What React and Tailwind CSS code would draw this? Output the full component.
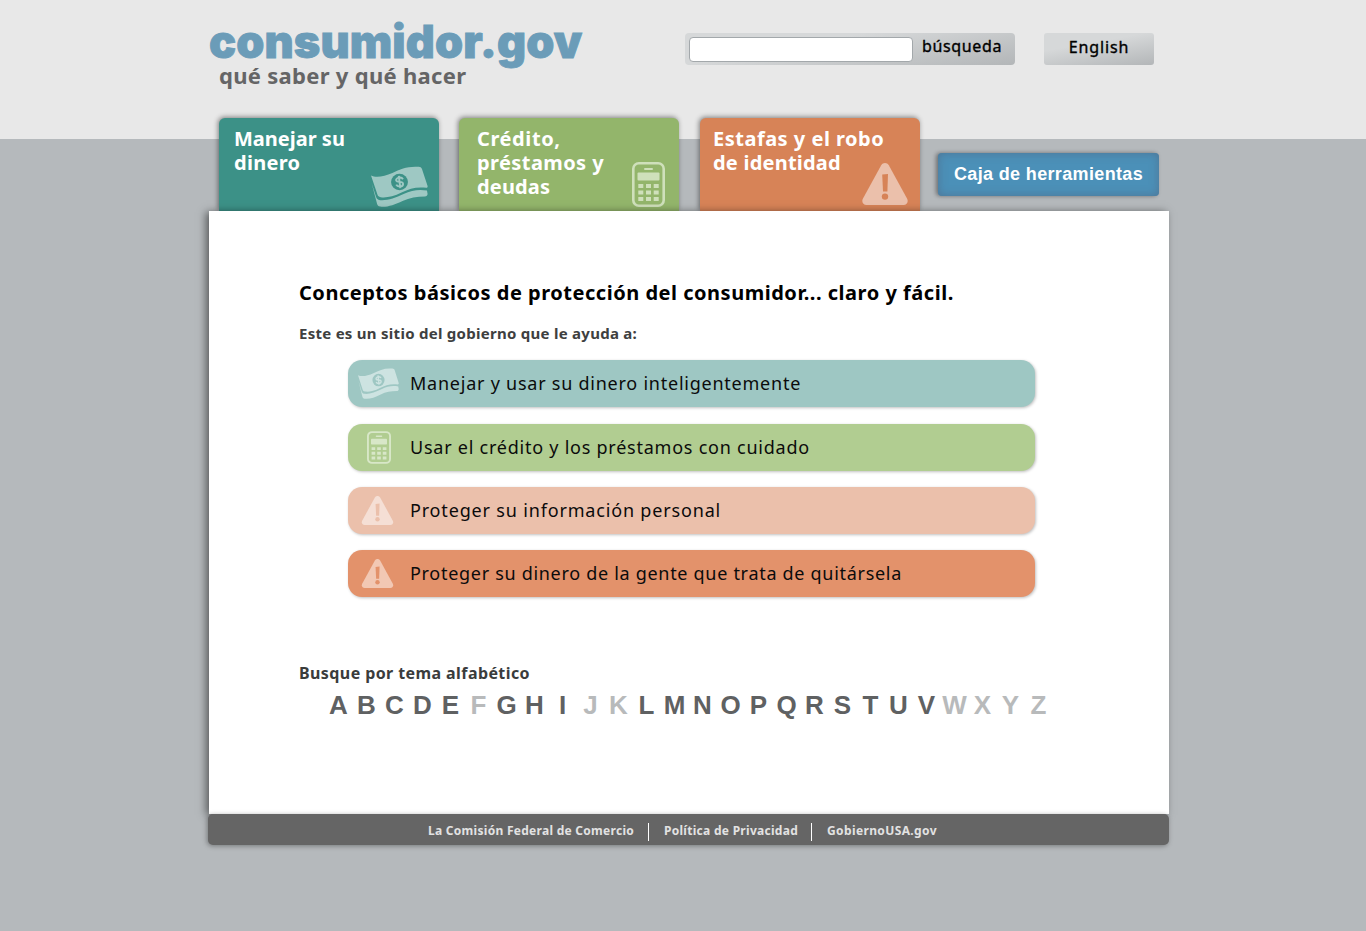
function Money({ className, fill, hole }) {
  return (
    <svg className={className} viewBox="0 0 56 41" preserveAspectRatio="none" aria-hidden="true">
      <path
        fill={fill}
        d="M0 9.5C5 12 13 10.5 21 7C29 3 36 0 47 0.8C48.5 0.9 49.4 1.5 50 2.8L55.6 20C55.8 21 55.4 21.8 54.4 21.8C45 20.5 38 22.5 30 26.5C22 30.5 15 32 9.5 31.2C7.5 30.8 7 30.3 6.4 28.8Z"
      />
      <path
        fill={fill}
        d="M0.6 17L5 31C5.8 33.2 7 34 9.5 34.2C17 34.6 24 31.6 32 28C40 24.4 47 23 55 24.6L55.6 28C55.4 29.6 54.6 30.4 53 30.4C45 30.4 38 31.5 31 35C23 39 15 41.6 9 40.6C7 40.2 6.6 39.4 6 38Z"
      />
      <circle cx="28" cy="16" r="8.3" fill={hole} />
      <path
        d="M31.4 13.2C30.6 11.8 28.8 11.3 27.2 11.7C25.2 12.2 24.3 13.6 24.8 14.7C25.3 15.9 27 15.8 28.5 15.9C30.3 16 31.6 16.6 31.5 18.1C31.4 19.6 29.8 20.5 28.2 20.5C26.6 20.5 25.3 19.8 24.8 18.6M27.3 9.8L28.8 22.2"
        fill="none"
        stroke={fill}
        strokeWidth="1.9"
      />
    </svg>
  );
}

function Calculator({ className, color }) {
  return (
    <svg className={className} viewBox="0 0 33 45" fill={color} aria-hidden="true">
      <rect x="1.3" y="1.3" width="30.4" height="42.4" rx="5.5" fill="none" stroke={color} strokeWidth="2.6" />
      <rect x="12" y="6" width="9" height="2" rx="1" />
      <rect x="5.5" y="10.5" width="22" height="8" rx="1" />
      <path d="M6.3 22h5v4h-5zM14 22h5v4h-5zM21.7 22h5v4h-5zM6.3 28.5h5v4h-5zM14 28.5h5v4h-5zM21.7 28.5h5v4h-5zM6.3 35h5v4h-5zM14 35h5v4h-5zM21.7 35h5v4h-5z" />
    </svg>
  );
}

function Warning({ className, fill, mark }) {
  return (
    <svg className={className} viewBox="0 0 46 42" aria-hidden="true">
      <path
        fill={fill}
        d="M19.2 2.2C21 -0.7 25 -0.7 26.8 2.2L45 35.4C46.8 38.8 45 42 41.5 42H4.5C1 42 -0.8 38.8 1 35.4Z"
      />
      <path fill={mark} d="M20.2 11.5L26 11L25.4 28.5H21Z" />
      <circle cx="23" cy="33.6" r="3.2" fill={mark} />
    </svg>
  );
}

const tabShadow = "shadow-[-1px_-1px_5px_rgba(0,0,0,0.45)]";

const items = [
  {
    text: "Manejar y usar su dinero inteligentemente",
    style: "bg-[#9ec7c3]",
    tracking: "tracking-[0.76px]",
    icon: <Money className="ml-[10px] h-[31px] w-[41px]" fill="#cde3e1" hole="#9ec7c3" />,
  },
  {
    text: "Usar el crédito y los préstamos con cuidado",
    style: "mt-[17px] bg-[#b1cd91]",
    tracking: "tracking-[0.76px]",
    icon: <Calculator className="ml-[19px] h-[33px] w-[24px]" color="#d8e7c8" />,
  },
  {
    text: "Proteger su información personal",
    style: "mt-4 bg-[#ebc0ab]",
    tracking: "tracking-[0.83px]",
    icon: <Warning className="ml-[13px] h-[29px] w-[33px]" fill="#f5dfd5" mark="#ebc0ab" />,
  },
  {
    text: "Proteger su dinero de la gente que trata de quitársela",
    style: "mt-4 bg-[#e3926b]",
    tracking: "tracking-[0.7px]",
    icon: <Warning className="ml-[13px] h-[29px] w-[33px]" fill="#f2c8b4" mark="#e3926b" />,
  },
];

const disabledLetters = "FJKWXYZ";

export default function App() {
  return (
    <div className="h-[931px] bg-[linear-gradient(#e8e8e8_139px,#b5b9bc_139px)] font-['Noto_Sans',sans-serif] whitespace-nowrap">
      <div className="ml-[209px] w-[960px]">
        <header className="flex h-[118px] items-start">
          <div className="w-[476px] pt-5">
            <div className="font-['Inter',sans-serif] text-[45px] leading-[44px] font-black tracking-[0.12px] text-[#6b9cb8] [-webkit-text-stroke:0.9px_#6b9cb8]">consumidor.gov</div>
            <div className="-mt-px pl-[10px] text-[22px] leading-6 font-bold tracking-[0.3px] text-[#656566]">qué saber y qué hacer</div>
          </div>
          <div className="mt-[33px] flex h-8 w-[330px] items-center rounded bg-[linear-gradient(170deg,#d6d8d9_35%,#b3b6b8)] pl-1">
            <div className="h-[25px] w-[224px] rounded-[4px] border border-[#a3a8ab] bg-white" />
            <span className="ml-[9px] -mt-[7px] text-[16px] leading-6 tracking-[0.65px] text-black [-webkit-text-stroke:0.35px_black]">búsqueda</span>
          </div>
          <div className="mt-[33px] ml-[29px] flex h-8 w-[110px] items-center justify-center rounded-[3px] bg-[linear-gradient(170deg,#d6d8d9_35%,#b3b6b8)]">
            <span className="-mt-[5px] text-[16px] leading-6 tracking-[0.9px] text-black [-webkit-text-stroke:0.35px_black]">English</span>
          </div>
        </header>

        <nav className="flex h-[93px] items-start pl-[10px] text-[20px] leading-6 font-bold text-white">
          <div className={`flex h-[93px] w-[220px] justify-between rounded-t-md bg-[#3c9187] pt-[9px] pr-[11px] pl-[15px] ${tabShadow}`}>
            <div>
              <div>Manejar su</div>
              <div className="tracking-[0.3px]">dinero</div>
            </div>
            <Money className="mt-[39px] h-[41px] w-[57px]" fill="#9ec8c3" hole="#3c9187" />
          </div>
          <div className={`ml-5 flex h-[93px] w-[220px] justify-between rounded-t-md bg-[#93b56b] pt-[9px] pr-[14px] pl-[18px] ${tabShadow}`}>
            <div>
              <div className="tracking-[0.6px]">Crédito,</div>
              <div className="tracking-[0.41px]">préstamos y</div>
              <div className="tracking-[0.15px]">deudas</div>
            </div>
            <Calculator className="mt-[35px] h-[45px] w-[33px]" color="#cfe0bb" />
          </div>
          <div className={`relative ml-[21px] h-[93px] w-[220px] rounded-t-md bg-[#d78357] pt-[9px] pl-[13px] ${tabShadow}`}>
            <div className="tracking-[0.5px]">Estafas y el robo</div>
            <div className="tracking-[0.22px]">de identidad</div>
            <Warning className="absolute right-3 bottom-[6px] h-[42px] w-[46px]" fill="#ebc0ab" mark="#d78357" />
          </div>
          <div className="mt-[35px] ml-[18px] flex h-[43px] w-[221px] items-center justify-center rounded bg-[#4b90b8] shadow-[-2px_0_4px_rgba(0,0,0,0.4),inset_0_0_10px_rgba(80,110,140,0.8)]">
            <span className="-mt-[2px] font-['Liberation_Sans',Arial,sans-serif] text-[18px] leading-6 tracking-[0.35px]">Caja de herramientas</span>
          </div>
        </nav>

        <main className="relative h-[603px] bg-white pt-[68px] pl-[90px] shadow-[-3px_1px_8px_rgba(0,0,0,0.5)]">
          <h1 className="text-[20px] leading-7 font-bold tracking-[0.52px] text-black">
            Conceptos básicos de protección del consumidor... claro y fácil.
          </h1>
          <p className="mt-4 text-[15px] leading-5 font-bold tracking-[0.27px] text-[#3e4040]">Este es un sitio del gobierno que le ayuda a:</p>
          <ul className="mt-[17px] ml-[49px] w-[687px]">
            {items.map((item) => (
              <li key={item.text} className={`flex h-[47px] items-center rounded-[14px] shadow-[1px_1px_3px_rgba(0,0,0,0.25)] ${item.style}`}>
                <span className="w-[62px]">{item.icon}</span>
                <span className={`text-[18px] text-[#0b0b0b] ${item.tracking}`}>{item.text}</span>
              </li>
            ))}
          </ul>
          <h2 className="mt-16 text-[16px] leading-6 font-bold tracking-[0.41px] text-[#3a3c3c]">Busque por tema alfabético</h2>
          <div className="mt-[6px] ml-[25.5px] flex font-['Liberation_Sans',Arial,sans-serif] text-[26px] leading-7 font-bold">
            {[..."ABCDEFGHIJKLMNOPQRSTUVWXYZ"].map((letter) => (
              <span key={letter} className={`w-7 text-center ${disabledLetters.includes(letter) ? "text-[#b8babb]" : "text-[#5f6162]"}`}>
                {letter}
              </span>
            ))}
          </div>
        </main>

        <footer className="relative -ml-px flex h-[31px] w-[961px] items-center rounded-[5px] bg-[#656565] pt-[2px] pl-[220px] text-[12px] font-bold text-[#e2e2e2] shadow-[-1px_1px_5px_rgba(0,0,0,0.35)]">
          <span className="mt-px w-[220px] tracking-[0.28px]">La Comisión Federal de Comercio</span>
          <span className="mt-[3px] h-[18px] w-px bg-white" />
          <span className="mt-px ml-[15px] w-[147px] tracking-[0.28px]">Política de Privacidad</span>
          <span className="mt-[3px] h-[18px] w-px bg-white" />
          <span className="mt-px ml-[15px] tracking-[0.38px]">GobiernoUSA.gov</span>
        </footer>
      </div>
    </div>
  );
}
